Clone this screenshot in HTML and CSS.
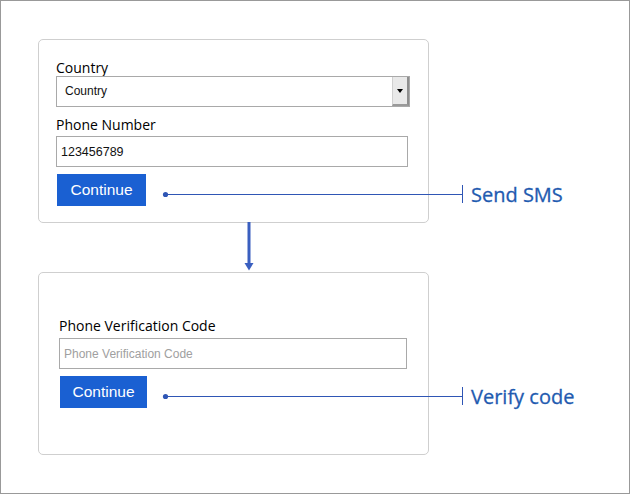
FILE: index.html
```html
<!DOCTYPE html>
<html>
  <head>
    <meta charset="utf-8" />
    <title>Phone sign-up flow</title>
    <link rel="stylesheet" href="styles.css">
  </head>
  <body>
    <div class="frame">
      <!-- step 1: send SMS -->
      <div class="card card-phone">
        <label class="field-label">Country</label>
        <div class="select">
          <span class="select-value">Country</span>
          <span class="select-button"><span class="select-arrow"></span></span>
        </div>
        <label class="field-label label-gap">Phone Number</label>
        <input class="text-input" type="text" value="123456789">
        <button class="btn">Continue</button>
      </div>

      <div class="card card-code">
        <label class="field-label">Phone Verification Code</label>
        <input class="text-input" type="text" placeholder="Phone Verification Code">
        <button class="btn">Continue</button>
      </div>

      <!-- annotations drawn over the cards -->
      <svg class="connectors" width="630" height="495" viewBox="0 0 630 495">
        <rect x="247.5" y="222" width="3" height="42" fill="#3a5fc0" />
        <polygon points="244.5,263 253.5,263 249,270.5" fill="#3a5fc0" />

        <circle cx="165.5" cy="194.5" r="2.6" fill="#2f56b5" />
        <line x1="165" y1="194.5" x2="462" y2="194.5" stroke="#2f56b5" stroke-width="1" />
        <line x1="462.5" y1="185" x2="462.5" y2="203" stroke="#2f56b5" stroke-width="1" />

        <circle cx="165.5" cy="396.5" r="2.6" fill="#2f56b5" />
        <line x1="165" y1="396.5" x2="462" y2="396.5" stroke="#2f56b5" stroke-width="1" />
        <line x1="462.5" y1="387" x2="462.5" y2="405" stroke="#2f56b5" stroke-width="1" />
      </svg>
      <div class="note note-sms">Send SMS</div>
      <div class="note note-verify">Verify code</div>
    </div>
  </body>
</html>
```

FILE: styles.css
```css
body {
  margin: 0;
  background-color: #fff;
}

.frame {
  position: relative;
  width: 630px;
  height: 494px;
  box-sizing: border-box;
  border: 1px solid #999;
  padding: 38px 0 0 37px;
  font-family: "Open Sans", Arial, sans-serif;
}

.card {
  width: 391px;
  box-sizing: border-box;
  border: 1px solid #cfcfcf;
  border-radius: 5px;
  background-color: #fff;
  display: flex;
  flex-direction: column;
  align-items: flex-start;
}

.card-phone {
  height: 184px;
  padding: 19px 17px 0 17px;
}

.card-code {
  height: 183px;
  margin-top: 49px;
  padding: 44px 20px 0 20px;
}

.field-label {
  display: block;
  font-size: 14px;
  line-height: 17px;
  color: #000;
  margin-bottom: 0;
}

.card-code .field-label {
  margin-bottom: 4px;
}

.label-gap {
  margin-top: 9px;
  margin-bottom: 3px;
}

.select {
  width: 354px;
  height: 31px;
  box-sizing: border-box;
  border: 1px solid #a9a9a9;
  display: flex;
  align-items: stretch;
  background-color: #fff;
}

.select-value {
  flex: 1;
  padding-left: 8px;
  font-family: "Liberation Sans", Arial, sans-serif;
  font-size: 12px;
  line-height: 29px;
  color: #111;
}

.select-button {
  width: 17px;
  box-sizing: border-box;
  background-color: #e9e9e9;
  border-left: 1px solid #d0d0d0;
  border-right: 2px solid #8f8f8f;
  border-bottom: 2px solid #9a9a9a;
  display: flex;
  align-items: center;
  justify-content: center;
}

.select-arrow {
  width: 0;
  height: 0;
  border-left: 3.5px solid transparent;
  border-right: 3.5px solid transparent;
  border-top: 4px solid #000;
  margin-top: 1px;
}

.text-input {
  width: 352px;
  height: 31px;
  box-sizing: border-box;
  margin: 0;
  border: 1px solid #a9a9a9;
  padding: 0 4px;
  font-family: "Liberation Sans", Arial, sans-serif;
  font-size: 12.5px;
  color: #111;
  outline: none;
}

.card-code .text-input {
  width: 348px;
  height: 31px;
  font-size: 12px;
}

.text-input::placeholder {
  color: #a0a0a0;
}

.btn {
  margin: 7px 0 0 1px;
  width: 89px;
  height: 32px;
  border: none;
  padding: 0;
  background-color: #1a60d2;
  color: #fff;
  font-family: "Liberation Sans", Arial, sans-serif;
  font-size: 15.5px;
  cursor: pointer;
}

.card-code .btn {
  width: 87px;
}

.connectors {
  position: absolute;
  left: -1px;
  top: -1px;
  pointer-events: none;
}

.note {
  position: absolute;
  left: 470px;
  font-size: 20px;
  line-height: 26px;
  color: #1f5bb0;
  -webkit-text-stroke: 0.3px #1f5bb0;
}

.note-sms {
  top: 181px;
}

.note-verify {
  top: 383px;
}
```
